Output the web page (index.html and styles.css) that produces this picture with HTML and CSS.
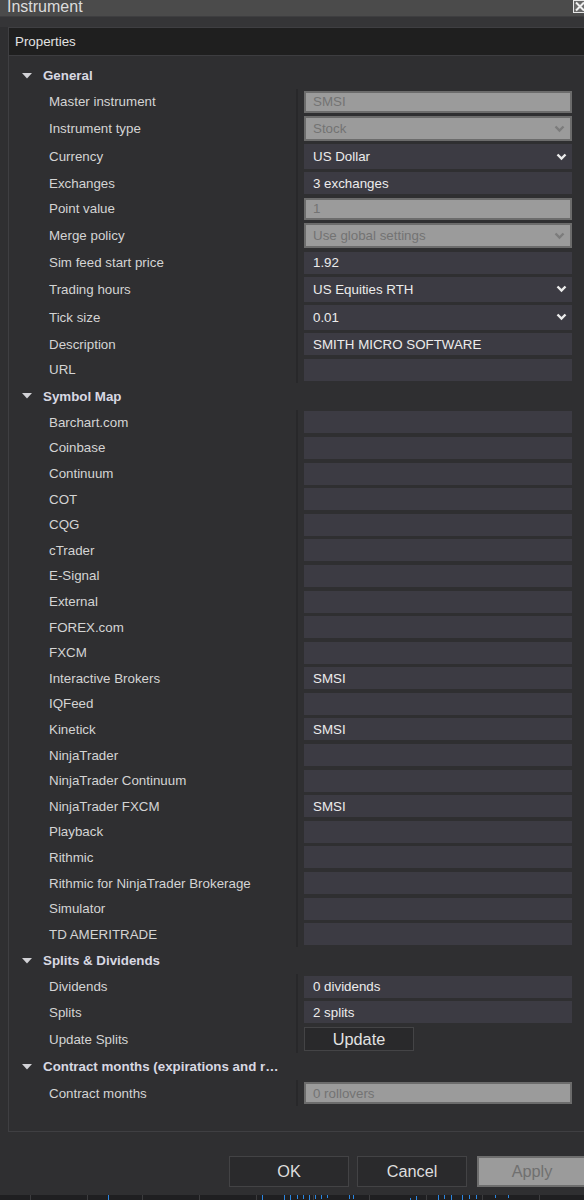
FILE: index.html
```html
<!DOCTYPE html>
<html lang="en">
<head>
    <meta charset="UTF-8">
    <meta name="viewport" content="width=device-width, initial-scale=1.0">
    <title>Instrument</title>
    <link rel="stylesheet" href="styles.css">
</head>
<body>

    <!-- Window title -->
    <div class="titlebar">
        <span class="title">Instrument</span>
        <span class="close">
            <svg width="12" height="11" viewBox="0 0 12 11"><path d="M2 1.5 L10 9.5 M10 1.5 L2 9.5" stroke="#f0f0f0" stroke-width="2"/></svg>
        </span>
    </div>
    <div class="band"></div>

    <!-- Property grid -->
    <div class="panel">
        <div class="panel-head">Properties</div>
        <div class="grid">

            <div class="sec-head">
                <svg class="caret" width="10" height="6" viewBox="0 0 10 6"><polygon points="0,0 10,0 5,5.5" fill="#d2d2d6"/></svg>
                <span class="sec-title">General</span>
            </div>
            <div class="row"><div class="label">Master instrument</div><div class="cell"><div class="field off">SMSI</div></div></div>
            <div class="row sel"><div class="label">Instrument type</div><div class="cell"><div class="field off"><span>Stock</span><svg class="chev" width="11" height="8" viewBox="0 0 11 8"><path d="M1.5 1.5 L5.5 5.5 L9.5 1.5" fill="none" stroke="#7c7c7c" stroke-width="2.4"/></svg></div></div></div>
            <div class="row sel"><div class="label">Currency</div><div class="cell"><div class="field"><span>US Dollar</span><svg class="chev" width="11" height="8" viewBox="0 0 11 8"><path d="M1.5 1.5 L5.5 5.5 L9.5 1.5" fill="none" stroke="#ececec" stroke-width="2.4"/></svg></div></div></div>
            <div class="row"><div class="label">Exchanges</div><div class="cell"><div class="field">3 exchanges</div></div></div>
            <div class="row"><div class="label">Point value</div><div class="cell"><div class="field off">1</div></div></div>
            <div class="row sel"><div class="label">Merge policy</div><div class="cell"><div class="field off"><span>Use global settings</span><svg class="chev" width="11" height="8" viewBox="0 0 11 8"><path d="M1.5 1.5 L5.5 5.5 L9.5 1.5" fill="none" stroke="#7c7c7c" stroke-width="2.4"/></svg></div></div></div>
            <div class="row"><div class="label">Sim feed start price</div><div class="cell"><div class="field">1.92</div></div></div>
            <div class="row sel"><div class="label">Trading hours</div><div class="cell"><div class="field"><span>US Equities RTH</span><svg class="chev" width="11" height="8" viewBox="0 0 11 8"><path d="M1.5 1.5 L5.5 5.5 L9.5 1.5" fill="none" stroke="#ececec" stroke-width="2.4"/></svg></div></div></div>
            <div class="row sel"><div class="label">Tick size</div><div class="cell"><div class="field"><span>0.01</span><svg class="chev" width="11" height="8" viewBox="0 0 11 8"><path d="M1.5 1.5 L5.5 5.5 L9.5 1.5" fill="none" stroke="#ececec" stroke-width="2.4"/></svg></div></div></div>
            <div class="row"><div class="label">Description</div><div class="cell"><div class="field">SMITH MICRO SOFTWARE</div></div></div>
            <div class="row"><div class="label">URL</div><div class="cell"><div class="field"></div></div></div>

            <div class="sec-head">
                <svg class="caret" width="10" height="6" viewBox="0 0 10 6"><polygon points="0,0 10,0 5,5.5" fill="#d2d2d6"/></svg>
                <span class="sec-title">Symbol Map</span>
            </div>
            <div class="row"><div class="label">Barchart.com</div><div class="cell"><div class="field"></div></div></div>
            <div class="row"><div class="label">Coinbase</div><div class="cell"><div class="field"></div></div></div>
            <div class="row"><div class="label">Continuum</div><div class="cell"><div class="field"></div></div></div>
            <div class="row"><div class="label">COT</div><div class="cell"><div class="field"></div></div></div>
            <div class="row"><div class="label">CQG</div><div class="cell"><div class="field"></div></div></div>
            <div class="row"><div class="label">cTrader</div><div class="cell"><div class="field"></div></div></div>
            <div class="row"><div class="label">E-Signal</div><div class="cell"><div class="field"></div></div></div>
            <div class="row"><div class="label">External</div><div class="cell"><div class="field"></div></div></div>
            <div class="row"><div class="label">FOREX.com</div><div class="cell"><div class="field"></div></div></div>
            <div class="row"><div class="label">FXCM</div><div class="cell"><div class="field"></div></div></div>
            <div class="row"><div class="label">Interactive Brokers</div><div class="cell"><div class="field">SMSI</div></div></div>
            <div class="row"><div class="label">IQFeed</div><div class="cell"><div class="field"></div></div></div>
            <div class="row"><div class="label">Kinetick</div><div class="cell"><div class="field">SMSI</div></div></div>
            <div class="row"><div class="label">NinjaTrader</div><div class="cell"><div class="field"></div></div></div>
            <div class="row"><div class="label">NinjaTrader Continuum</div><div class="cell"><div class="field"></div></div></div>
            <div class="row"><div class="label">NinjaTrader FXCM</div><div class="cell"><div class="field">SMSI</div></div></div>
            <div class="row"><div class="label">Playback</div><div class="cell"><div class="field"></div></div></div>
            <div class="row"><div class="label">Rithmic</div><div class="cell"><div class="field"></div></div></div>
            <div class="row"><div class="label">Rithmic for NinjaTrader Brokerage</div><div class="cell"><div class="field"></div></div></div>
            <div class="row"><div class="label">Simulator</div><div class="cell"><div class="field"></div></div></div>
            <div class="row"><div class="label">TD AMERITRADE</div><div class="cell"><div class="field"></div></div></div>

            <div class="sec-head">
                <svg class="caret" width="10" height="6" viewBox="0 0 10 6"><polygon points="0,0 10,0 5,5.5" fill="#d2d2d6"/></svg>
                <span class="sec-title">Splits &amp; Dividends</span>
            </div>
            <div class="row"><div class="label">Dividends</div><div class="cell"><div class="field">0 dividends</div></div></div>
            <div class="row"><div class="label">Splits</div><div class="cell"><div class="field">2 splits</div></div></div>
            <div class="row sel"><div class="label">Update Splits</div><div class="cell"><button class="update">Update</button></div></div>

            <div class="sec-head">
                <svg class="caret" width="10" height="6" viewBox="0 0 10 6"><polygon points="0,0 10,0 5,5.5" fill="#d2d2d6"/></svg>
                <span class="sec-title">Contract months (expirations and r…</span>
            </div>
            <div class="row"><div class="label">Contract months</div><div class="cell"><div class="field off">0 rollovers</div></div></div>

        </div>
    </div>

    <!-- Dialog buttons -->
    <div class="footer">
        <button class="btn ok">OK</button>
        <button class="btn cancel">Cancel</button>
        <button class="btn apply">Apply</button>
    </div>

    <!-- chart edge peeking under the dialog -->
    <svg class="strip" width="584" height="5" viewBox="0 0 584 5">
        <rect width="584" height="5" fill="#1f1f21"/>
        <g stroke="#3c3c3e" stroke-width="1">
            <path d="M30.5 0V5M87.5 0V5M142.5 0V5M199.5 0V5M256.5 0V5M313.5 0V5M369.5 0V5M426.5 0V5M482.5 0V5M539.5 0V5"/>
        </g>
        <g stroke="#2b86e0" stroke-width="1">
            <path d="M108.5 0V5M262.5 0V5M284.5 0V5M290.5 0V5M297.5 0V4M303.5 0V4M309.5 0V5M315.5 0V4M321.5 0V4M327.5 0V3M349.5 0V4M353.5 0V4M410.5 3V5M416.5 1V5M438.5 0V5M444.5 0V4M451.5 0V5M462.5 0V5M469.5 0V4M476.5 0V4M495.5 0V3M508.5 0V3"/>
        </g>
    </svg>

</body>
</html>
```

FILE: styles.css
```css
* { margin: 0; padding: 0; box-sizing: border-box; }
body {
    width: 584px;
    height: 1200px;
    overflow: hidden;
    background: #2f2f31;
    font-family: "Liberation Sans", Arial, sans-serif;
    font-size: 13.33px;
    color: #d4d4d4;
}

/* Title bar */
.titlebar {
    height: 16px;
    background: #4b4b4b;
    display: flex;
    justify-content: space-between;
    align-items: flex-start;
}
.title {
    font-size: 16px;
    line-height: 13px;
    padding-left: 7px;
    color: #dcdcdc;
}
.close {
    width: 14px;
    height: 13px;
    margin-right: -3px;
    border: 1px solid #e6e6e6;
    background: #686868;
    display: flex;
    align-items: center;
    justify-content: center;
}
.band {
    height: 11px;
    background: #353537;
    border-top: 1px solid #3e3e40;
}

/* Property panel */
.panel {
    margin-left: 8px;
    margin-right: -10px;
    border: 1px solid #3f3f42;
    padding-bottom: 25px;
}
.panel-head {
    height: 28px;
    line-height: 28px;
    padding-left: 6px;
    background: #1f1f1f;
    border-bottom: 1px solid #3d3d40;
    color: #e2e2e2;
}
.grid { padding-top: 6px; }

.sec-head {
    height: 27px;
    display: flex;
    align-items: center;
    padding-left: 13px;
    font-weight: bold;
    color: #d8d8e2;
}
.caret { margin-right: 11px; flex-shrink: 0; }
.sec-title { white-space: nowrap; }

.row {
    display: flex;
    height: 25.6px;
}
.row.sel { height: 28px; }
.label {
    width: 287px;
    padding-left: 40px;
    display: flex;
    align-items: center;
    white-space: nowrap;
}
.cell {
    border-left: 2px solid #28282a;
    padding-left: 6px;
    display: flex;
    align-items: center;
}
.field {
    width: 268px;
    height: 22px;
    padding-left: 9px;
    display: flex;
    align-items: center;
    background: #3c3b43;
    color: #ececec;
}
.sel .field { height: 25px; }
.field.off {
    background: #9b9b9b;
    border: 2px solid #6c6c6c;
    padding-left: 7px;
    color: #737373;
}
.chev { margin-left: auto; margin-right: 5px; }

.update {
    width: 110px;
    height: 24px;
    background: #29292b;
    border: 1px solid #444446;
    color: #e2e2e2;
    font-family: "Liberation Sans", Arial, sans-serif;
    font-size: 16.3px;
}

/* Dialog buttons */
.footer {
    display: flex;
    padding-left: 229px;
    margin-top: 24px;
}
.btn {
    flex-shrink: 0;
    height: 31px;
    background: #2a2a2c;
    border: 1px solid #434345;
    color: #dedede;
    font-family: "Liberation Sans", Arial, sans-serif;
    font-size: 16.3px;
}
.ok { width: 120px; margin-right: 8px; }
.cancel { width: 110px; margin-right: 10px; }
.apply {
    width: 110px;
    background: #9b9b9b;
    border: 2px solid #6e6e6e;
    color: #707070;
}

.strip { display: block; margin-top: 8px; }
```
